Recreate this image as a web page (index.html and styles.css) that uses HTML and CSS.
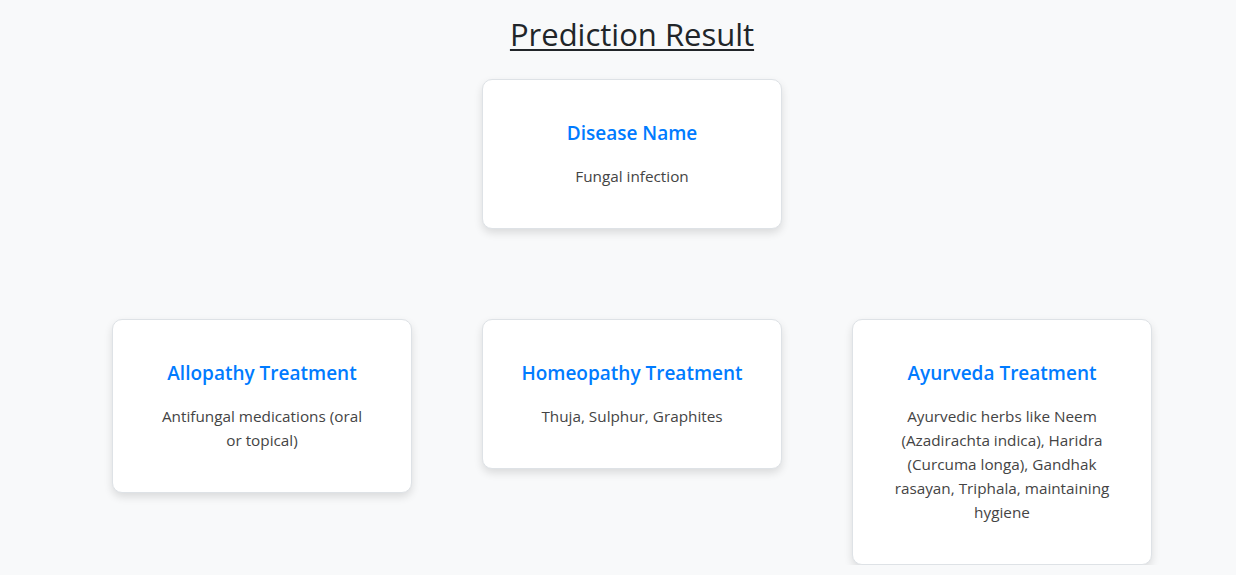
FILE: index.html
```html
<!DOCTYPE html>
<html lang="en">
<head>
<meta charset="utf-8">
<title>Prediction Result</title>
<link rel="stylesheet" href="styles.css">
</head>
<body>
<main class="page">
  <h1 class="page-title">Prediction Result</h1>
  <div class="row row-top">
    <section class="card">
      <h3 class="card-title">Disease Name</h3>
      <p class="card-text">Fungal infection</p>
    </section>
  </div>
  <div class="row row-bottom">
    <section class="card">
      <h3 class="card-title">Allopathy Treatment</h3>
      <p class="card-text">Antifungal medications (oral or topical)</p>
    </section>
    <section class="card">
      <h3 class="card-title">Homeopathy Treatment</h3>
      <p class="card-text">Thuja, Sulphur, Graphites</p>
    </section>
    <section class="card">
      <h3 class="card-title">Ayurveda Treatment</h3>
      <p class="card-text">Ayurvedic herbs like Neem (Azadirachta indica), Haridra (Curcuma longa), Gandhak rasayan, Triphala, maintaining hygiene</p>
    </section>
  </div>
</main>
</body>
</html>
```
FILE: styles.css
```css
html, body {
  margin: 0;
  padding: 0;
}
body {
  background: #f8f9fa;
  font-family: "Open Sans", "Noto Sans", sans-serif;
  color: #212529;
}
.page {
  padding: 14px 0 0 28px;
  display: flex;
  flex-direction: column;
  align-items: center;
}
.page-title {
  margin: 0;
  font-size: 31px;
  font-weight: 500;
  line-height: 40px;
  text-decoration: underline;
  text-underline-offset: 3px;
  text-decoration-thickness: 2px;
  color: #212529;
}
.row {
  display: flex;
  justify-content: center;
  align-items: flex-start;
  gap: 70px;
}
.row-top {
  margin-top: 25px;
}
.row-bottom {
  margin-top: 90px;
}
.card {
  width: 300px;
  box-sizing: border-box;
  background: #fff;
  border: 1px solid #dee2e6;
  border-radius: 10px;
  box-shadow: 0 4px 8px rgba(0, 0, 0, 0.12);
  padding: 41px 41px 40px;
  text-align: center;
}
.card-title {
  margin: 0 -20px 19px;
  font-size: 19px;
  font-weight: 600;
  line-height: 24px;
  color: #007bff;
}
.card-text {
  margin: 0;
  font-size: 15.3px;
  line-height: 24px;
  color: #444;
}
```
